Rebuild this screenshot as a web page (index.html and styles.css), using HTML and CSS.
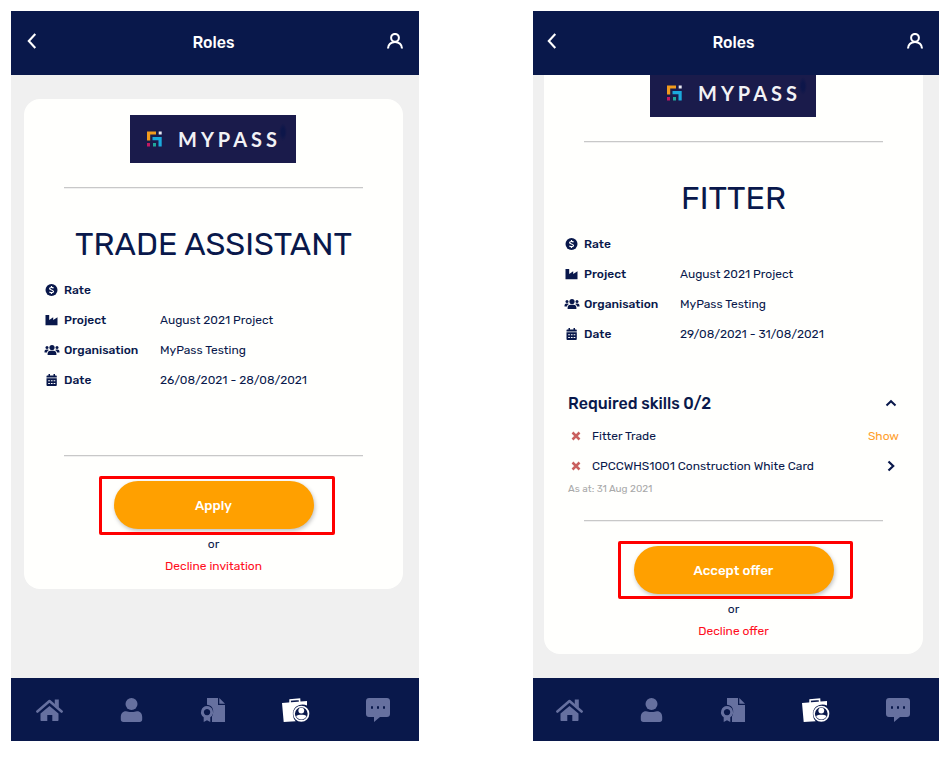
FILE: index.html
```html
<!DOCTYPE html>
<html lang="en">
<head>
  <meta charset="UTF-8" />
  <meta name="viewport" content="width=device-width, initial-scale=1.0"/>
  <title>Roles</title>
  <link rel="stylesheet" href="styles.css">
</head>
<body>
  <!-- shared icons -->
  <svg class="sprite">
    <symbol id="i-back" viewBox="0 0 10 16"><path d="M8.3 1 1.8 8l6.5 7" fill="none" stroke="currentColor" stroke-width="2.1"/></symbol>
    <symbol id="i-account" viewBox="0 0 18 16"><circle cx="9" cy="4.8" r="3.900" fill="none" stroke="currentColor" stroke-width="2"/><path d="M2 15.500c0-3.800 3-6.500 7-6.500s7 2.700 7 6.500" fill="none" stroke="currentColor" stroke-width="2.100"/></symbol>
    <symbol id="i-dollar" viewBox="0 0 16 14"><circle cx="7.500" cy="7" r="6" fill="currentColor"/><path d="M9.500 5.200C9 4.300 5.600 4 5.600 5.700c0 1.500 3.900 1.100 3.900 2.800 0 1.600-3.500 1.500-4 .2M7.500 3v1.500M7.500 9.500V11" fill="none" stroke="#fff" stroke-width="1.200"/></symbol>
    <symbol id="i-industry" viewBox="0 0 16 14"><path d="M1.500 2h3.700v5l4-2.700V7l4.300-2.700V12.300H1.500z" fill="currentColor"/></symbol>
    <symbol id="i-users" viewBox="0 0 16 14"><g fill="currentColor"><circle cx="8" cy="4.600" r="2.600"/><circle cx="3" cy="4.400" r="1.500"/><circle cx="13" cy="4.400" r="1.500"/><path d="M3.600 12v-1.300C3.600 9 4.800 7.800 6.300 7.800h3.400c1.500 0 2.700 1.200 2.700 2.900V12zM.5 8.700c0-1.400.9-2.200 2-2.200h1.200c.5 0 .9.200 1.200.5-1.100.6-1.800 1.500-2 2.500H.5zM15.500 8.700c0-1.400-.9-2.200-2-2.200h-1.200c-.5 0-.9.200-1.200.5 1.100.6 1.800 1.500 2 2.500h2.400z"/></g></symbol>
    <symbol id="i-calendar" viewBox="0 0 16 14"><path d="M2.500 4.500V3.300c0-.5.300-.8.800-.8h1.200V1H6v1.500h3.500V1H11v1.500h1c.5 0 .8.300.8.800v1.200zM2.500 5.300h10.300V12c0 .6-.3 1-.9 1H3.400c-.6 0-.9-.4-.9-1z" fill="currentColor"/><path d="M4.200 7.700h7.200M4.200 10.500h7.200" stroke="#fff" stroke-width="1.100" stroke-dasharray="1.700 1"/></symbol>
    <symbol id="i-cross" viewBox="0 0 10 10"><path d="m1.500 1.500 7 7m0-7-7 7" stroke="currentColor" stroke-width="2.500"/></symbol>
    <symbol id="i-up" viewBox="0 0 12 8"><path d="m1.500 6.500 4.500-4.300 4.500 4.300" fill="none" stroke="currentColor" stroke-width="2"/></symbol>
    <symbol id="i-next" viewBox="0 0 8 12"><path d="m1.500 1.500 4.700 4.500-4.700 4.500" fill="none" stroke="currentColor" stroke-width="2.200"/></symbol>
    <symbol id="i-home" viewBox="0.500 0 28 24"><path d="M14 8 23 15.500V22c0 .6-.4 1-1 1h-5.200v-6h-5v6H6c-.6 0-1-.4-1-1v-6.500z" fill="currentColor"/><path d="m1.900 13.500 12.100-10.400 12.100 10.400" fill="none" stroke="currentColor" stroke-width="2.600" stroke-linecap="round" stroke-linejoin="round"/><path d="M19.300 1.500h4v8.500l-4-3.500z" fill="currentColor"/></symbol>
    <symbol id="i-user" viewBox="0.500 0 28 24"><g fill="currentColor"><circle cx="14" cy="6" r="6"/><path d="M8.500 13.200c2 0 2.500.9 5.500.9s3.500-.9 5.500-.9c3.500 0 5.200 2.600 5.200 5.800v2.500c0 1.500-1 2.500-2.500 2.500H5.800c-1.500 0-2.500-1-2.500-2.500V19c0-3.200 1.700-5.800 5.200-5.800z"/></g></symbol>
    <symbol id="i-cert" viewBox="1 0 28 24"><g fill="currentColor"><path d="M8 0h11v7h7v17H13v-5.500c2.500-4.500 1.300-11.500-5-11.700zM20.300 0 26 5.700h-5.700z"/><path fill-rule="evenodd" d="M8 8a6.200 6.200 0 0 1 3.300 11.300V24L8 22.200 4.700 24v-4.700A6.200 6.200 0 0 1 8 8zm0 2.900a3.200 3.200 0 1 0 .1 0z"/></g></symbol>
    <symbol id="i-case" viewBox="0.500 0 28 24"><path d="m.5 5 25-2v4.500c-6-3-14.700 1-14.100 8.700.2 2.800 1 5.300 2.800 7L2.200 24z" fill="currentColor"/><path d="M8.600 5V2l9.400-.8.200 3" fill="none" stroke="currentColor" stroke-width="1.600"/><circle cx="19.800" cy="15.700" r="7.200" fill="none" stroke="currentColor" stroke-width="1.700"/><circle cx="19.800" cy="12.600" r="2.900" fill="currentColor"/><path d="M14.600 18c2-1.700 8.400-1.700 10.400 0-1.400 4.500-9 4.500-10.400 0z" fill="currentColor"/></symbol>
    <symbol id="i-chat" viewBox="0 0 28 24"><path d="M5 0h18c1.800 0 3 1.200 3 3v13c0 1.800-1.200 3-3 3h-7l-6 5v-5H5c-1.800 0-3-1.200-3-3V3c0-1.800 1.200-3 3-3z" fill="currentColor"/><path d="M7 8.300h2v2.400H7zM13 8.300h2v2.400h-2zM19 8.300h2v2.400h-2z" fill="#09184b"/></symbol>
    <symbol id="i-mark" viewBox="0 0 15 16"><path d="M0 .5h9v3H3.200v6H0z" fill="#f29b1d"/><path d="M11.700.5h3v3h-3z" fill="#e8e9f2"/><path d="M5.500 6h9.200v9.500h-3.200V9.300h-6z" fill="#1ba9dc"/><path d="M0 12h3v3.500H0z" fill="#c31862"/><path d="M6 12h3v3.500H6z" fill="#1fa89b"/></symbol>
  </svg>

  <div class="phones">
    <div class="phone">
      <div class="app">
        <header class="topbar">
          <svg class="back"><use href="#i-back"/></svg>
          <span class="page-name">Roles</span>
          <svg class="account"><use href="#i-account"/></svg>
        </header>
        <main class="screen">
          <section class="card">
            <div class="logo"><svg><use href="#i-mark"/></svg><span>MYPASS</span></div>
            <hr>
            <h1 class="role">TRADE ASSISTANT</h1>
            <ul class="details">
              <li><svg><use href="#i-dollar"/></svg><b>Rate</b></li>
              <li><svg><use href="#i-industry"/></svg><b>Project</b><span>August 2021 Project</span></li>
              <li><svg><use href="#i-users"/></svg><b>Organisation</b><span>MyPass Testing</span></li>
              <li><svg><use href="#i-calendar"/></svg><b>Date</b><span>26/08/2021 - 28/08/2021</span></li>
            </ul>
            <hr class="end">
            <div class="action"><button>Apply</button></div>
            <p class="or">or</p>
            <a class="decline">Decline invitation</a>
          </section>
        </main>
        <nav class="tabs">
          <svg><use href="#i-home"/></svg>
          <svg><use href="#i-user"/></svg>
          <svg><use href="#i-cert"/></svg>
          <svg class="active"><use href="#i-case"/></svg>
          <svg><use href="#i-chat"/></svg>
        </nav>
      </div>
    </div>

    <div class="phone cropped">
      <div class="app">
        <header class="topbar">
          <svg class="back"><use href="#i-back"/></svg>
          <span class="page-name">Roles</span>
          <svg class="account"><use href="#i-account"/></svg>
        </header>
        <main class="screen">
          <section class="card scrolled">
            <div class="logo"><svg><use href="#i-mark"/></svg><span>MYPASS</span></div>
            <hr>
            <h1 class="role">FITTER</h1>
            <ul class="details">
              <li><svg><use href="#i-dollar"/></svg><b>Rate</b></li>
              <li><svg><use href="#i-industry"/></svg><b>Project</b><span>August 2021 Project</span></li>
              <li><svg><use href="#i-users"/></svg><b>Organisation</b><span>MyPass Testing</span></li>
              <li><svg><use href="#i-calendar"/></svg><b>Date</b><span>29/08/2021 - 31/08/2021</span></li>
            </ul>
            <div class="skills">
              <h2><span>Required skills 0/2</span><svg class="up"><use href="#i-up"/></svg></h2>
              <div class="skill"><svg class="cross"><use href="#i-cross"/></svg><span>Fitter Trade</span><a class="show">Show</a></div>
              <div class="skill"><svg class="cross"><use href="#i-cross"/></svg><span>CPCCWHS1001 Construction White Card</span><svg class="next"><use href="#i-next"/></svg></div>
              <p class="as-at">As at: 31 Aug 2021</p>
            </div>
            <hr class="end">
            <div class="action accept"><button>Accept offer</button></div>
            <p class="or">or</p>
            <a class="decline">Decline offer</a>
          </section>
        </main>
        <nav class="tabs">
          <svg><use href="#i-home"/></svg>
          <svg><use href="#i-user"/></svg>
          <svg><use href="#i-cert"/></svg>
          <svg class="active"><use href="#i-case"/></svg>
          <svg><use href="#i-chat"/></svg>
        </nav>
      </div>
    </div>
  </div>
</body>
</html>
```
FILE: styles.css
```css
body {
  margin: 0;
  background-color: #fff;
  font-family: Rubik, Roboto, sans-serif;
  font-size: 12px;
  color: #09184b;
}

.sprite {
  display: none;
}

.phones {
  display: flex;
  gap: 114px;
  padding: 11px;
}

.phone {
  width: 408px;
  height: 730px;
  overflow: hidden;
}

.cropped {
  width: 406px;
}

.app {
  display: flex;
  flex-direction: column;
  width: 408px;
  height: 730px;
  background-color: #f0f0f0;
}

.cropped .app {
  margin-left: -2px;
}

.topbar {
  display: flex;
  justify-content: space-between;
  height: 64px;
  box-sizing: border-box;
  padding: 22px 15px 0 16px;
  background-color: #09184b;
  color: #fff;
}

.back {
  width: 10px;
  height: 16px;
}

.account {
  width: 18px;
  height: 16px;
}

.page-name {
  margin-left: 4px;
  font-size: 16px;
  font-weight: 500;
  line-height: 20px;
}

.screen {
  flex: 1;
  overflow: hidden;
}

.card {
  display: flex;
  flex-direction: column;
  align-items: center;
  width: 379px;
  box-sizing: border-box;
  margin: 24px 0 0 13px;
  padding: 16px 0 12px;
  border-radius: 16px;
  background-color: #fffffd;
}

.scrolled {
  margin-top: -22px;
}

.logo {
  display: flex;
  align-items: center;
  width: 166px;
  height: 48px;
  box-sizing: border-box;
  padding-left: 17px;
  margin-right: 1px;
  background: radial-gradient(ellipse 4px 9px at 153px 17px, #0d164a 40%, transparent) #1a1b4b;
  color: #f2f2f5;
}

.logo svg {
  width: 15px;
  height: 16px;
  margin-right: 16px;
}

.logo span {
  font-family: Lato, sans-serif;
  font-size: 20px;
  font-weight: 700;
  letter-spacing: 4px;
}

hr {
  width: 299px;
  height: 2px;
  box-sizing: border-box;
  margin: 24px 0 0;
  border: 0;
  border-top: 1px solid #c8c8c8;
  border-bottom: 1px solid #f0f0f0;
}

.role {
  margin: 35px 0 11px;
  font-size: 32px;
  font-weight: 400;
  line-height: 40px;
}

.details {
  width: 100%;
  box-sizing: border-box;
  margin: 0;
  padding: 0 0 0 20px;
  list-style: none;
}

.details li {
  display: flex;
  align-items: center;
  height: 30px;
}

.details svg {
  width: 16px;
  height: 14px;
  margin-right: 4px;
}

.details b {
  width: 96px;
  font-weight: 500;
}

.end {
  margin-top: 60px;
}

.skills {
  width: 331px;
  margin-top: 39px;
}

.skills h2 {
  display: flex;
  align-items: center;
  justify-content: space-between;
  height: 30px;
  margin: 0 0 3px;
  padding-right: 2px;
  font-size: 16px;
  font-weight: 500;
}

.skill {
  display: flex;
  align-items: center;
  height: 30px;
}

.cross {
  width: 10px;
  height: 10px;
  margin: 0 11px 0 3px;
  color: #c9605f;
}

.up {
  width: 12px;
  height: 8px;
}

.next {
  width: 8px;
  height: 12px;
  margin: 0 4px 0 auto;
}

.show {
  margin-left: auto;
  color: #ffa02e;
}

.as-at {
  margin: 0;
  font-size: 10px;
  line-height: 16px;
  color: #a9a9a9;
}

.skills + .end {
  margin-top: 23px;
}

.action {
  position: relative;
  width: 200px;
  height: 48px;
  margin: 24px 0 4px;
}

/* red marker around the button */
.action::after {
  content: '';
  position: absolute;
  inset: -5px -21px -6px -15px;
  border: 3px solid #f00;
  border-radius: 2px;
}

.accept::after {
  inset: -5px -19px -5px -16px;
}

button {
  width: 200px;
  height: 48px;
  border: none;
  border-radius: 24px;
  background-color: #ffa000;
  box-shadow: 1px 2px 4px rgba(0,0,0,0.25);
  font-family: inherit;
  font-size: 13.333px;
  font-weight: 500;
  color: #fff;
}

.or {
  margin: 0;
  line-height: 22px;
}

.decline {
  line-height: 22px;
  color: #ff0d1c;
}

.tabs {
  display: flex;
  align-items: center;
  height: 63px;
  margin-left: -2px;
  background-color: #09184b;
  color: #66709f;
}

.tabs svg {
  width: 28px;
  height: 24px;
  margin: 0 27px;
}

.tabs .active {
  color: #fff;
}
```
